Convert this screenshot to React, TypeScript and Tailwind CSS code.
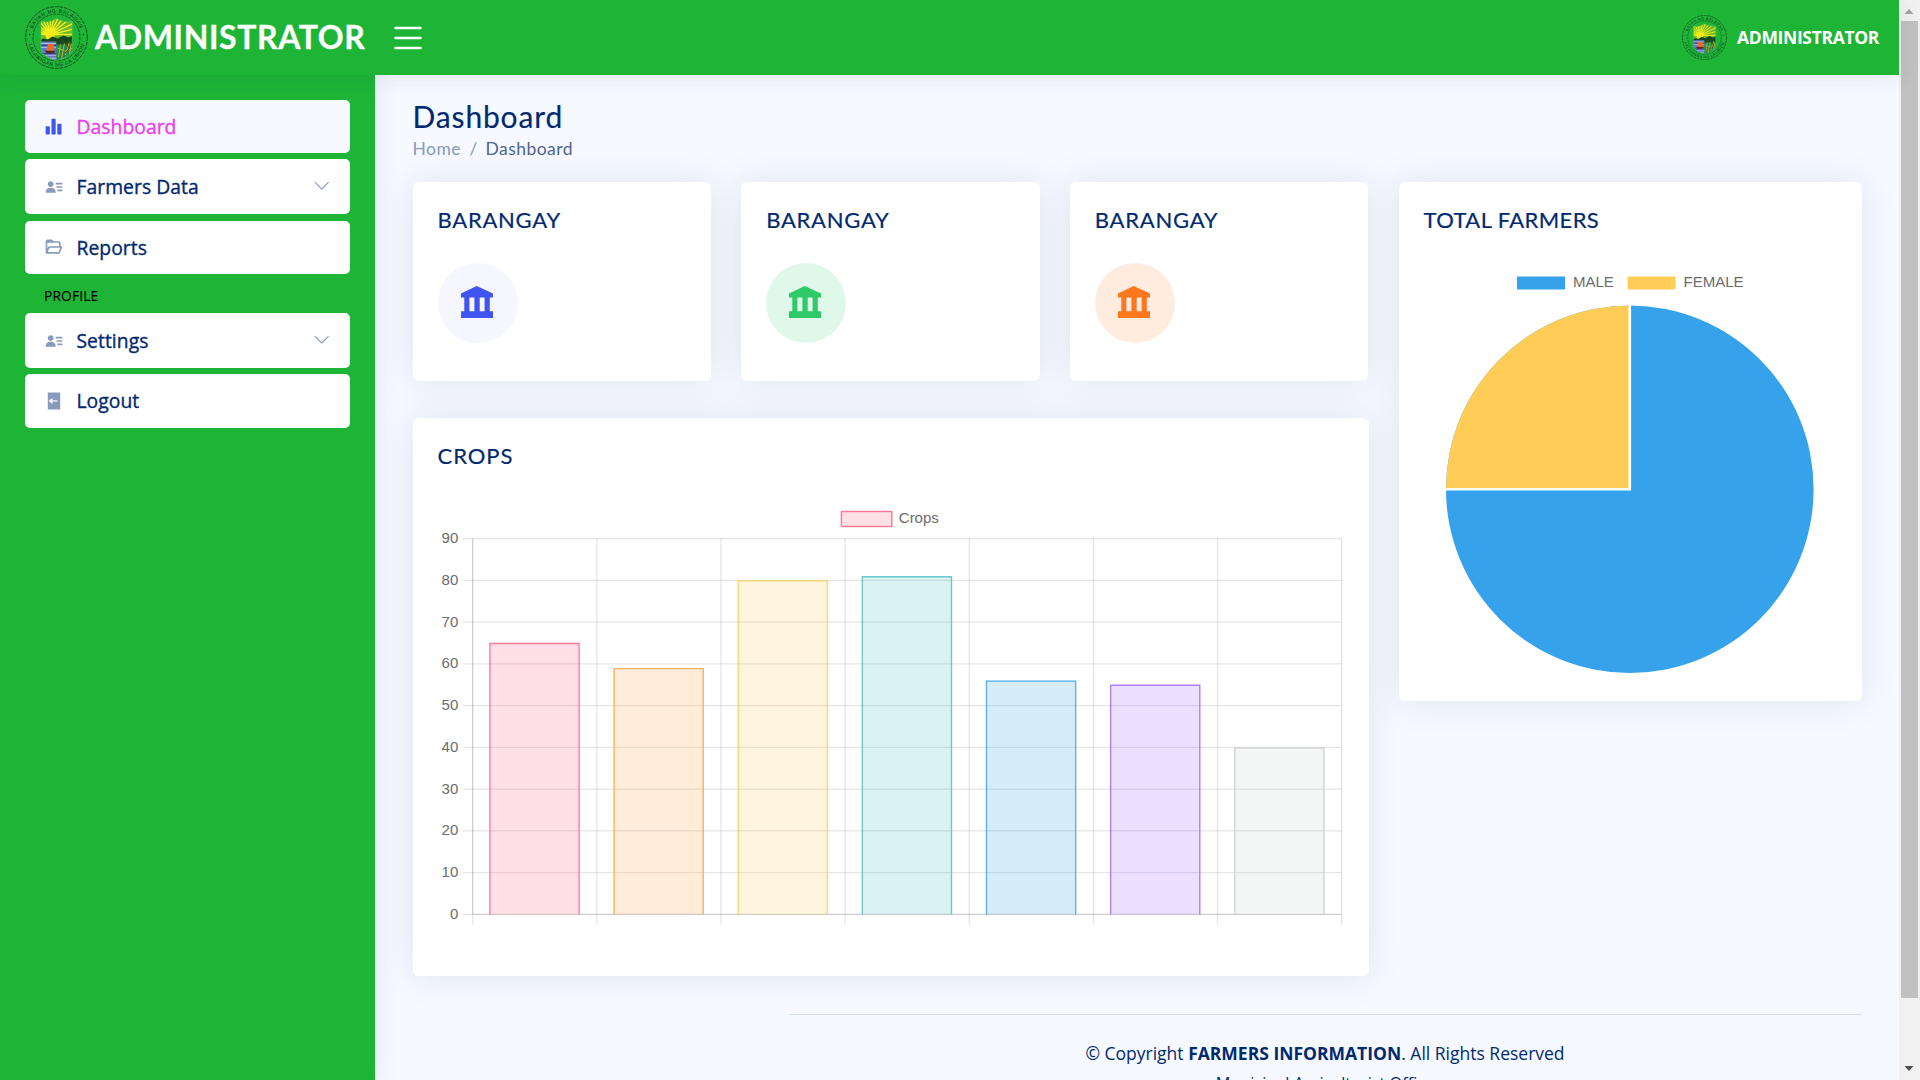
import React from 'react';
import { BsChevronDown, BsList } from 'react-icons/bs';
import { BiSolidBarChartAlt2, BiSolidUserDetail, BiFolderOpen } from 'react-icons/bi';

const OPEN = 'font-["Open_Sans",sans-serif]';
const CARD = 'rounded-[6px] bg-white shadow-[0_0_37px_rgba(1,41,112,0.1)]';

function Seal({ id, className }: { id: string; className: string }) {
  const rays = Array.from({ length: 15 }, (_, i) => {
    const a = Math.PI + (i * Math.PI) / 14;
    return `M25.5 29L${(25.5 + 34 * Math.cos(a)).toFixed(1)} ${(29 + 34 * Math.sin(a)).toFixed(1)}`;
  }).join('');
  return (
    <svg viewBox="0 0 64 64" className={className}>
      <defs>
        <clipPath id={`${id}-shield`}>
          <path d="M16.3 15.5Q24 18 32 12.5Q40 18 48 15.5V44Q47 51 32 55.5Q17 51 16.3 44Z" />
        </clipPath>
        <path id={`${id}-top`} d="M6.6 32a25.4 25.4 0 0 1 50.8 0" />
        <path id={`${id}-bottom`} d="M2.7 32a29.3 29.3 0 0 0 58.6 0" />
      </defs>
      <circle cx="32" cy="32" r="31.3" fill="none" stroke="#0f2c18" strokeWidth="0.8" strokeDasharray="3.6 1.1" />
      <circle cx="32" cy="32" r="23.8" fill="none" stroke="#0f2c18" strokeWidth="0.7" strokeDasharray="3 1" />
      <circle cx="4.6" cy="29" r="0.7" fill="#0f2c18" />
      <circle cx="59.4" cy="29" r="0.7" fill="#0f2c18" />
      <g fill="#0f2c18" fontFamily="Liberation Sans, sans-serif" fontSize="5.2" textAnchor="middle">
        <text letterSpacing="0.6"><textPath href={`#${id}-top`} startOffset="50%">BAYAN NG BALAOAN</textPath></text>
        <text letterSpacing="0.6"><textPath href={`#${id}-bottom`} startOffset="50%">LALAWIGAN NG LA UNION</textPath></text>
      </g>
      <g clipPath={`url(#${id}-shield)`}>
        <rect x="15" y="12" width="34" height="22" fill="#6ab92a" />
        <path d={rays} stroke="#f4ee1c" strokeWidth="1.4" />
        <circle cx="25.5" cy="30" r="4.6" fill="#fbe80e" />
        <path d="M15 35l4-2 4 1 5-3 5 2 6-3 5 2 5-2v9H15z" fill="#17451b" />
        <path d="M15 36h17v22H15z" fill="#6478c8" />
        <path d="M15 38h17M15 42h17M15 50h17M15 53h17" stroke="#c9d3f4" strokeWidth="0.8" />
        <path d="M15 40h17M15 48.5h17" stroke="#2b2f8e" strokeWidth="1" />
        <path d="M23 38.5h6.5v7H22z" fill="#ec6a26" />
        <path d="M20 45.5h11l-2 2.5h-7z" fill="#5b2412" />
        <path d="M32 37h17v21H32z" fill="#1c8a4c" />
        <path d="M32 35l4-1 5 2 8-2v5H32z" fill="#1b4a1c" />
        <path d="M34 52l2-13M37 54l3-16M41 50l4-13M45 50l2-12M33 43l6 2M40 46l8-3" stroke="#d3b52c" strokeWidth="0.9" />
        <path d="M42 39l3 4-4 5" stroke="#6b3a18" strokeWidth="1" fill="none" />
      </g>
      <path d="M16.3 15.5Q24 18 32 12.5Q40 18 48 15.5V44Q47 51 32 55.5Q17 51 16.3 44Z" fill="none" stroke="#8fbf6a" strokeWidth="0.4" />
    </svg>
  );
}

function BankIcon({ className }: { className: string }) {
  return (
    <svg viewBox="0 0 32 32" className={className} fill="currentColor">
      <path d="M15.7 0 32 7.4V11.4H28.8V25.3H32V32H0V25.3H3.3V11.4H0V7.4ZM8.4 11.4V25.3H13.4V11.4ZM18.7 11.4V25.3H23.6V11.4Z" fillRule="evenodd" />
    </svg>
  );
}

function LogoutIcon() {
  return (
    <svg viewBox="0 0 18 18" className="ml-px size-[18px] shrink-0">
      <path d="M2.8 .5h12.4v17H2.8z" fill="#899bbd" />
      <path d="M12.5 9H5.5" stroke="#fff" strokeWidth="1.2" />
      <path d="M3.6 9l3.9-2.9v5.8z" fill="#fff" />
    </svg>
  );
}

function NavItem({ icon, label, active, chevron, className }: {
  icon: React.ReactNode; label: string; active?: boolean; chevron?: boolean; className: string;
}) {
  return (
    <a className={`flex items-center rounded-[5px] pl-[19px] pr-[20px] ${active ? 'bg-[#f6f9ff]' : 'bg-white'} ${className}`}>
      <span className={`flex w-5 shrink-0 ${active ? 'text-[#4154f1]' : 'text-[#899bbd]'}`}>{icon}</span>
      <span className={`pt-px ml-[12.5px] text-[19.3px] leading-none tracking-[0.05px] ${active ? 'text-[#ee3cf0] [-webkit-text-stroke:0.35px_#ee3cf0]' : 'text-[#012970] [-webkit-text-stroke:0.35px_#012970]'}`}>{label}</span>
      {chevron && <BsChevronDown className="mb-[2px] ml-auto size-[17.5px] text-[#899bbd]" />}
    </a>
  );
}

function CardTitle({ children, className = '' }: { children: React.ReactNode; className?: string }) {
  return (
    <h5 className={`-mt-px pb-px font-["Lato",sans-serif] text-[22px] leading-[27px] text-[#012970] [-webkit-text-stroke:0.2px_#012970] ${className}`}>
      {children}
    </h5>
  );
}

function InfoCard({ circle, color }: { circle: string; color: string }) {
  return (
    <div className={`h-[199px] pl-[25px] pt-[25px] ${CARD}`}>
      <CardTitle className="tracking-[0.75px]">BARANGAY</CardTitle>
      <div className={`mt-[29px] flex size-20 items-center justify-center rounded-full ${circle}`}>
        <BankIcon className={`mb-[2px] mr-[2px] size-8 ${color}`} />
      </div>
    </div>
  );
}

const BARS = [
  { v: 65, fill: 'rgba(255,99,132,0.2)', stroke: 'rgb(255,99,132)' },
  { v: 59, fill: 'rgba(255,159,64,0.2)', stroke: 'rgb(255,159,64)' },
  { v: 80, fill: 'rgba(255,205,86,0.2)', stroke: 'rgb(255,205,86)' },
  { v: 81, fill: 'rgba(75,192,192,0.2)', stroke: 'rgb(75,192,192)' },
  { v: 56, fill: 'rgba(54,162,235,0.2)', stroke: 'rgb(54,162,235)' },
  { v: 55, fill: 'rgba(153,102,255,0.2)', stroke: 'rgb(153,102,255)' },
  { v: 40, fill: 'rgba(201,203,207,0.2)', stroke: 'rgb(201,203,207)' },
];

function CropsChart() {
  const left = 34.7, top = 38.5, bottom = 414.4, step = 124.14;
  const y = (v: number) => bottom - (v * (bottom - top)) / 90;
  return (
    <svg width="907" height="451" viewBox="0 0 907 451" fontFamily="Liberation Sans, Arial, sans-serif" fontSize="15">
      <rect x="403.4" y="11.5" width="50.4" height="15" fill="rgba(255,99,132,0.2)" stroke="rgb(255,99,132)" strokeOpacity="0.85" strokeWidth="1.4" />
      <text x="460.8" y="23" fill="#6c6c6c">Crops</text>
      {Array.from({ length: 10 }, (_, i) => (
        <g key={i}>
          <path d={`M25 ${y(i * 10)}H${left + step * 7}`} stroke="rgba(0,0,0,0.1)" strokeWidth="1.25" />
          <text x="20.3" y={y(i * 10) + 4.6} textAnchor="end" fill="#6c6c6c">{i * 10}</text>
        </g>
      ))}
      {Array.from({ length: 8 }, (_, i) => (
        <path key={i} d={`M${left + step * i} ${top}V424.8`} stroke="rgba(0,0,0,0.1)" strokeWidth="1.25" />
      ))}
      <path d={`M${left} ${top}V${bottom}H${left + step * 7}`} fill="none" stroke="rgba(0,0,0,0.1)" strokeWidth="1.25" />
      {BARS.map((b, i) => {
        const x = left + step * i + 17.2;
        return (
          <g key={b.stroke}>
            <rect x={x} y={y(b.v)} width="89.4" height={bottom - y(b.v)} fill={b.fill} />
            <path d={`M${x} ${bottom}V${y(b.v) + 0.6}H${x + 89.2}V${bottom}`} fill="none" stroke={b.stroke} strokeOpacity="0.8" strokeWidth="1.4" />
          </g>
        );
      })}
    </svg>
  );
}

function FarmersChart() {
  return (
    <svg width="413" height="413" viewBox="0 0 413 413" fontFamily="Liberation Sans, Arial, sans-serif" fontSize="15">
      <rect x="93" y="10.5" width="48" height="13" fill="#36a2eb" />
      <text x="149" y="20.8" fill="#6c6c6c">MALE</text>
      <rect x="203.6" y="10.5" width="48" height="13" fill="#ffcd56" />
      <text x="259.5" y="20.8" fill="#6c6c6c">FEMALE</text>
      <circle cx="205.8" cy="223.2" r="183.8" fill="#36a2eb" />
      <path d="M205.8 223.2V39.4A183.8 183.8 0 0 0 22 223.2Z" fill="#ffcd56" />
      <path d="M205.8 38V223.2H21" fill="none" stroke="#fff" strokeWidth="2.6" />
    </svg>
  );
}

export default function App() {
  return (
    <div className={`flex h-[1080px] w-[1920px] overflow-hidden bg-[#f6f9ff] ${OPEN} text-[#444444]`}>
      <div className="flex h-full w-[1899px] flex-col">
        <header className="relative z-10 flex h-[75px] shrink-0 items-center bg-[#1eb537] pl-[25px] pr-5 shadow-[0_2px_25px_rgba(1,41,112,0.1)]">
          <Seal id="brand" className="size-[63px]" />
          <span className='mb-[2px] ml-[7px] w-[280px] whitespace-nowrap font-["Lato",sans-serif] text-[32px] font-bold leading-none tracking-[0.6px] text-white [-webkit-text-stroke:0.3px_#fff]'>ADMINISTRATOR</span>
          <BsList className="ml-[12.5px] mt-px size-10 text-white" />
          <div className="ml-auto flex items-center">
            <Seal id="user" className="size-[45px]" />
            <span className="ml-[10px] text-[17.5px] font-bold leading-none tracking-[-0.34px] text-white">ADMINISTRATOR</span>
          </div>
        </header>

        <div className="flex min-h-0 flex-1">
          <aside className="flex w-[375px] shrink-0 flex-col bg-[#1eb537] px-[25px] pt-[25px] shadow-[0_0_25px_rgba(1,41,112,0.1)]">
            <NavItem className="h-[53px]" icon={<BiSolidBarChartAlt2 className="size-5" />} label="Dashboard" active />
            <NavItem className="mt-[6px] h-[55px]" icon={<BiSolidUserDetail className="size-5" />} label="Farmers Data" chevron />
            <NavItem className="mt-[7px] h-[53px] pb-px" icon={<BiFolderOpen className="size-5" />} label="Reports" />
            <div className="mb-[9px] mt-[13px] pl-[19px] text-[13.75px] leading-[17px] tracking-[0.15px] text-black [-webkit-text-stroke:0.15px_#000]">PROFILE</div>
            <NavItem className="h-[55px]" icon={<BiSolidUserDetail className="size-5" />} label="Settings" chevron />
            <NavItem className="mt-[6px] h-[54px] pb-px" icon={<LogoutIcon />} label="Logout" />
          </aside>

          <main className="flex flex-1 flex-col pl-[37.5px] pr-[37.5px] pt-[23px]">
            <h1 className='font-["Lato",sans-serif] text-[30px] leading-[36px] tracking-[0.85px] text-[#012970] [-webkit-text-stroke:0.15px_#012970]'>Dashboard</h1>
            <nav className='mt-[4px] flex font-["Lato",sans-serif] text-[17.5px] leading-[22px] tracking-[0.45px] text-[#899bbd]'>
              <span className="w-[57px]">Home</span>
              <span className="w-[16px]">/</span>
              <span className="text-[#51678f]">Dashboard</span>
            </nav>

            <div className="mt-[22px] flex h-[794px] shrink-0 items-start gap-[30px]">
              <div className="w-[956px]">
                <div className="grid grid-cols-3 gap-[30px]">
                  <InfoCard circle="bg-[#f6f6fe]" color="text-[#4154f1]" />
                  <InfoCard circle="bg-[#e0f8e9]" color="text-[#2eca6a]" />
                  <InfoCard circle="bg-[#ffecdf]" color="text-[#ff771d]" />
                </div>
                <div className={`mt-[37px] h-[558px] pl-[25px] pt-[25px] ${CARD}`}>
                  <CardTitle className="tracking-[0.95px]">CROPS</CardTitle>
                  <div className="mt-[30px]"><CropsChart /></div>
                </div>
              </div>
              <div className={`h-[519px] w-[463px] pl-[25px] pt-[25px] ${CARD}`}>
                <CardTitle className="tracking-[0.4px]">TOTAL FARMERS</CardTitle>
                <div className="mt-[32px]"><FarmersChart /></div>
              </div>
            </div>

            <footer className="ml-[376px] mt-[38px] border-t border-[#cddfff] pt-[26px] text-center text-[#012970]">
              <p className="whitespace-pre text-[17.5px] leading-6">© Copyright <b className="font-bold">FARMERS INFORMATION</b>. All Rights Reserved</p>
              <p className="mt-[6px] text-[16.25px] leading-6">Municipal Agriculturist Office</p>
            </footer>
          </main>
        </div>
      </div>

      <div className="flex h-full w-[21px] flex-col items-center bg-[#f1f1f1]">
        <svg width="21" height="21" viewBox="0 0 21 21" className="shrink-0"><path d="M5.5 14L10 9l4.5 5z" fill="#a3a3a3" /></svg>
        <div className="h-[977px] w-[17px] bg-[#c1c1c1]" />
        <svg width="21" height="21" viewBox="0 0 21 21" className="mt-auto shrink-0"><path d="M5.5 7l4.5 5 4.5-5z" fill="#505050" /></svg>
      </div>
    </div>
  );
}
